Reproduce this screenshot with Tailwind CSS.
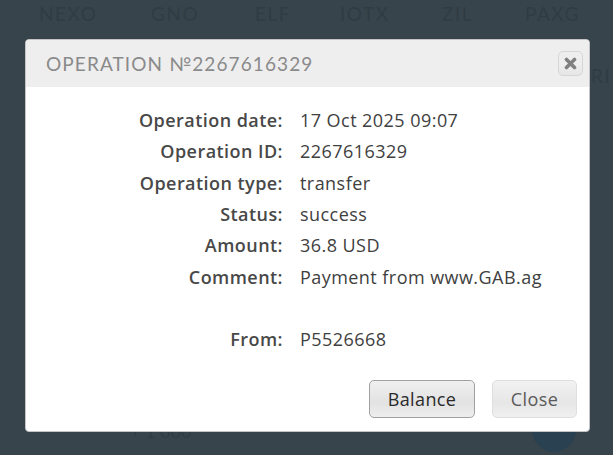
<!DOCTYPE html>
<html><head><meta charset="utf-8"><script src="https://cdn.jsdelivr.net/npm/@tailwindcss/browser@4"></script></head>
<body class="m-0">
<div class="relative w-[613px] h-[455px] overflow-hidden bg-[#37444c] font-['Open_Sans',sans-serif]">
  <div class="flex pt-[2px] pl-[39px] text-[19px] tracking-[1.5px] text-[#303c44] font-['Lato',sans-serif] leading-[24px]">
    <span class="w-[112px]">NEXO</span><span class="w-[104px]">GNO</span><span class="w-[85px]">ELF</span><span class="w-[102px]">IOTX</span><span class="w-[83px]">ZIL</span><span>PAXG</span>
  </div>
  <div class="absolute left-[130px] top-[421px] text-[18px] leading-[20px] text-[#303c44] font-['Lato',sans-serif]">+ 1 000</div>
  <div class="absolute left-[532px] top-[408px] w-[44px] h-[44px] rounded-full bg-[#2a4151]"></div>
  <div class="absolute left-[591px] top-[62px] text-[19px] tracking-[1.5px] text-[#303c44] font-['Lato',sans-serif]">RI</div>

  <div class="absolute left-[25px] top-[39px] w-[565px] h-[393px] bg-white rounded-[4px] border border-[#c4c4c4] overflow-hidden flex flex-col">
    <div class="h-[47px] shrink-0 bg-[#eeeeee] flex items-center justify-between pl-[20px] pr-[6px]">
      <span class="text-[19px] leading-[20px] mt-[1px] tracking-[1.1px] text-[#8a8a8a] font-['Lato',sans-serif]">OPERATION №2267616329</span>
      <span class="w-[25px] h-[25px] flex items-center justify-center rounded-[5px] border border-[#d6d6d6] bg-gradient-to-b from-[#eeeeee] via-[#eeeeee] to-[#e6e6e6]">
        <svg width="13" height="13" viewBox="0 0 13 13"><path d="M2.5 2.5L10.5 10.5M10.5 2.5L2.5 10.5" stroke="#808080" stroke-width="3.6" stroke-linecap="round"/></svg>
      </span>
    </div>
    <div class="grid grid-cols-[257px_1fr] gap-x-[17px] auto-rows-[31.3px] pt-[18px] items-center text-[18px] tracking-[0.45px] text-[#404040]">
      <div class="text-right font-semibold text-[#484848]">Operation date:</div><div>17 Oct 2025 09:07</div>
      <div class="text-right font-semibold text-[#484848]">Operation ID:</div><div>2267616329</div>
      <div class="text-right font-semibold text-[#484848]">Operation type:</div><div>transfer</div>
      <div class="text-right font-semibold text-[#484848]">Status:</div><div>success</div>
      <div class="text-right font-semibold text-[#484848]">Amount:</div><div>36.8 USD</div>
      <div class="text-right font-semibold text-[#484848]">Comment:</div><div>Payment from www.GAB.ag</div>
      <div></div><div></div>
      <div class="text-right font-semibold text-[#484848]">From:</div><div>P5526668</div>
    </div>
    <div class="mt-auto flex justify-end gap-[17px] pr-[12px] pb-[13px]">
      <button class="w-[106px] h-[38px] pt-[1px] rounded-[5px] border border-[#a0a0a0] bg-[linear-gradient(#f0f0f0,#e2e2e2_60%,#eeeeee)] text-[18px] tracking-[0.4px] text-[#2a2a2a]">Balance</button>
      <button class="w-[85px] h-[38px] pt-[1px] rounded-[5px] border border-[#dedede] bg-[linear-gradient(#f2f2f2,#e6e6e6_60%,#f0f0f0)] text-[18px] tracking-[0.4px] text-[#5a5a5a]">Close</button>
    </div>
  </div>
</div>
</body></html>
